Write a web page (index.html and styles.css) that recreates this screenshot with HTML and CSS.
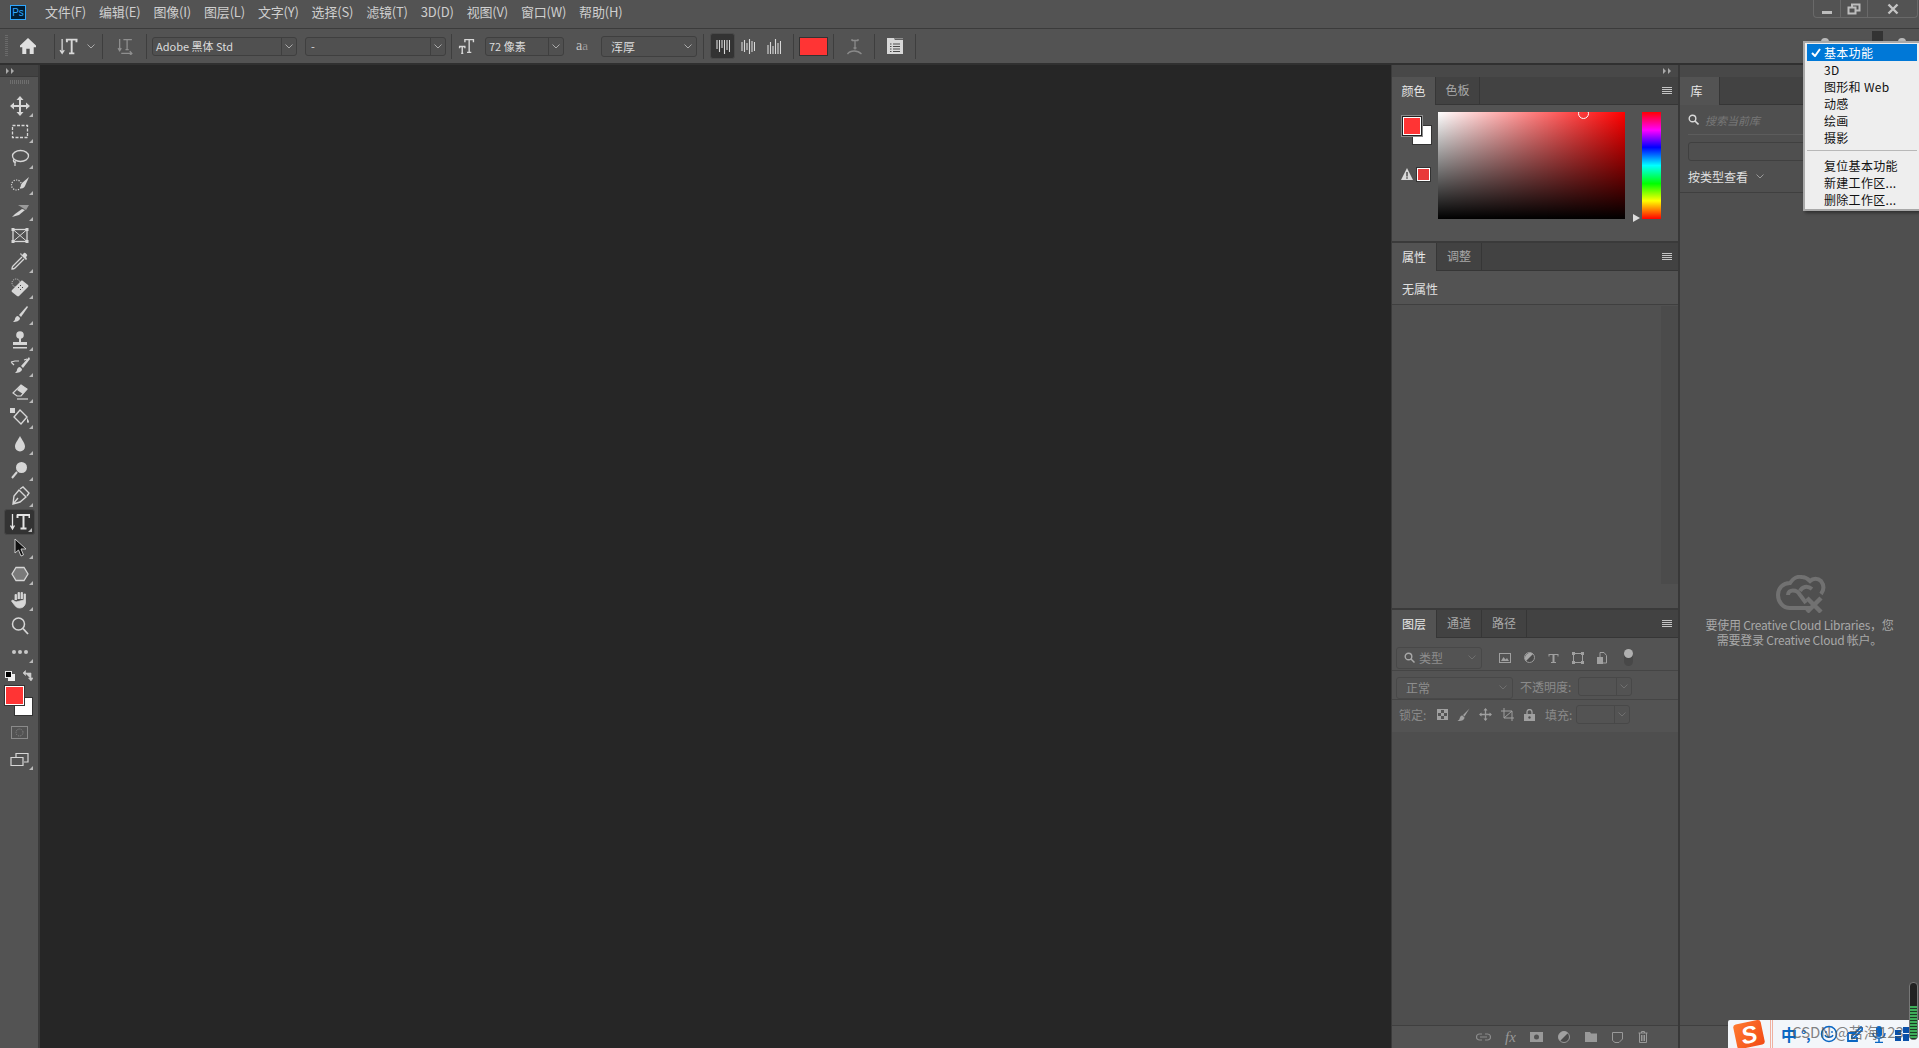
FILE: index.html
```html
<!DOCTYPE html>
<html lang="zh">
<head>
<meta charset="utf-8">
<title>Photoshop</title>
<link rel="stylesheet" href="styles.css">
</head>
<body>
<div class="app">
  <header class="menubar">
    <div class="pslogo">Ps</div>
    <nav class="menus">
      <span>文件(F)</span><span>编辑(E)</span><span>图像(I)</span><span>图层(L)</span><span>文字(Y)</span><span>选择(S)</span><span>滤镜(T)</span><span>3D(D)</span><span>视图(V)</span><span>窗口(W)</span><span>帮助(H)</span>
    </nav>
    <div class="winctl">
      <span class="wbtn"><svg width="12" height="12" viewBox="0 0 12 12"><rect x="1" y="8" width="10" height="3" fill="#bdbdbd"/></svg></span>
      <span class="wbtn"><svg width="14" height="12" viewBox="0 0 14 12"><path d="M1.5 4.500h7v6h-7zM5 4V1.500h7.500v6H9" fill="none" stroke="#bdbdbd" stroke-width="2"/></svg></span>
      <span class="wbtn wide"><svg width="12" height="12" viewBox="0 0 12 12"><path d="M1.500 1.500l9 9M10.500 1.500l-9 9" stroke="#c4c4c4" stroke-width="2.400"/></svg></span>
    </div>
  </header>

  <section class="options">
    <i class="grip"></i>
    <svg class="o-home" width="16" height="16" viewBox="0 0 14 14"><path d="M7 0L0 6.500V8h2v6h3.500V9.500h3V14H12V8h2V6.500z" fill="#e0e0e0"/></svg>
    <i class="osep s1"></i>
    <svg class="o-type" width="19" height="17" viewBox="0 0 17 16"><path d="M2.500 1v13M.5 11.500l2 3 2-3" fill="none" stroke="#d8d8d8" stroke-width="1.200"/><path d="M6 1.500h11M7 1v3M16 1v3M11.500 2v12M9 14.500h5" fill="none" stroke="#d8d8d8" stroke-width="1.800"/></svg>
    <svg class="chev c1" width="8" height="5" viewBox="0 0 8 5"><path d="M.5.500L4 4 7.500.500" fill="none" stroke="#aaa"/></svg>
    <i class="osep s2"></i>
    <svg class="o-warp" width="17" height="17" viewBox="0 0 14 16"><path d="M1.500 1v11M0 9.500l1.500 2.500 1.500-2.500M5 1.500h8M8.500 2v9M7 11h3M3 14.500h10M11 12.500l2 2-2 2" fill="none" stroke="#8f8f8f" stroke-width="1.200"/></svg>
    <i class="osep s3"></i>
    <div class="sel font"><span>Adobe 黑体 Std</span><b><svg width="8" height="5" viewBox="0 0 8 5"><path d="M.5.500L4 4 7.500.500" fill="none" stroke="#aaa"/></svg></b></div>
    <div class="sel style"><span>-</span><b><svg width="8" height="5" viewBox="0 0 8 5"><path d="M.5.500L4 4 7.500.500" fill="none" stroke="#aaa"/></svg></b></div>
    <i class="osep s4"></i>
    <svg class="o-size" width="17" height="16" viewBox="0 0 14 15"><path d="M5 1.500h9M5.500 1v3M13.500 1v3M9.500 2v11M7.500 13.500h4M0 8h6M.500 8v1.500M5.500 8v1.500M3 8v6M2 14.500h2" fill="none" stroke="#d8d8d8" stroke-width="1.300"/></svg>
    <div class="sel size"><span>72 像素</span><b><svg width="8" height="5" viewBox="0 0 8 5"><path d="M.5.500L4 4 7.500.500" fill="none" stroke="#aaa"/></svg></b></div>
    <span class="o-aa">a<small>a</small></span>
    <div class="sel aa"><span>浑厚</span><svg width="8" height="5" viewBox="0 0 8 5"><path d="M.5.500L4 4 7.500.500" fill="none" stroke="#aaa"/></svg></div>
    <i class="osep s5"></i>
    <span class="alignbtn on"><svg width="14" height="15" viewBox="0 0 14 15"><path d="M1 1v9M3.500 1v12M6 1v8M8.500 1v14M11 1v10M13.500 1v12" stroke="#d8d8d8" stroke-width="1.100"/></svg></span>
    <span class="alignbtn"><svg width="14" height="15" viewBox="0 0 14 15"><path d="M1 3v9M3.500 1v12M6 4v7M8.500 0v15M11 2v11M13.500 3v9" stroke="#d8d8d8" stroke-width="1.100"/></svg></span>
    <span class="alignbtn"><svg width="14" height="15" viewBox="0 0 14 15"><path d="M1 6v9M3.500 3v12M6 7v8M8.500 0v15M11 4v11M13.500 2v13" stroke="#d8d8d8" stroke-width="1.100"/></svg></span>
    <i class="osep s6"></i>
    <div class="o-color"></div>
    <i class="osep s7"></i>
    <svg class="o-warpt" width="15" height="17" viewBox="0 0 15 17"><path d="M5 2.500h6M5 1v2M11 1v2M8 2.500v9M6.500 10h3M.5 16c3-4 10-4 14 0" fill="none" stroke="#8a8a8a" stroke-width="1.300"/></svg>
    <i class="osep s8"></i>
    <svg class="o-panel" width="16" height="16" viewBox="0 0 16 16"><path d="M0 0h7l1 2h8v14H0z" fill="#d8d8d8"/><path d="M7 .5h9" stroke="#8d8d8d" stroke-width="1.500"/><path d="M3 6h1.500M6 6h7M3 8.500h1.500M6 8.500h7M3 11h1.500M6 11h7M3 13.500h1.500M6 13.500h7" stroke="#4a4a4a" stroke-width="1"/></svg>
    <i class="osep s9"></i>
    <div class="o-right">
      <svg class="o-dot" width="10" height="10" viewBox="0 0 10 10"><circle cx="5" cy="5" r="4" fill="#bbb"/></svg>
      <i class="o-ws"></i>
      <svg class="o-dot" width="10" height="10" viewBox="0 0 10 10"><circle cx="5" cy="5" r="4" fill="#bbb"/></svg>
    </div>
  </section>

  <main class="work">
    <aside class="tools">
      <div class="collapse"><svg width="8" height="6" viewBox="0 0 8 6"><path d="M0 0l3 3-3 3zM5 0l3 3-3 3z" fill="#aaa"/></svg></div>
      <i class="toolgrip"></i>
      <div class="toollist">
        <span class="tool sub"><svg viewBox="0 0 20 20"><path d="M10 3v14M3 10h14" stroke="#d6d6d6" stroke-width="2"/><path d="M10 0L6.500 4h7zM10 20l-3.500-4h7zM0 10l4-3.500v7zM20 10l-4-3.500v7z" fill="#d6d6d6"/></svg></span>
        <span class="tool sub"><svg viewBox="0 0 20 20"><rect x="2.500" y="3.500" width="15" height="12" fill="none" stroke="#d6d6d6" stroke-width="1.300" stroke-dasharray="3 1.500"/></svg></span>
        <span class="tool sub"><svg viewBox="0 0 20 20"><ellipse cx="10.500" cy="8" rx="8" ry="5.500" fill="none" stroke="#d6d6d6" stroke-width="1.300"/><path d="M4 11c-1.500 2 0 4 2 3M5 13v5" fill="none" stroke="#d6d6d6" stroke-width="1.200"/></svg></span>
        <span class="tool sub"><svg viewBox="0 0 20 20"><circle cx="6.500" cy="11" r="5" fill="none" stroke="#d6d6d6" stroke-width="1.200" stroke-dasharray="1.200 1.300"/><path d="M19 3l-7 6-2 5c2 1 4 0 5-2z" fill="#d6d6d6"/></svg></span>
        <span class="tool sub"><svg viewBox="0 0 20 20"><path d="M8 5h11l-3 5z" fill="#9a9a9a"/><path d="M12 9l-7 5-3 3 7-2 6-5z" fill="#d6d6d6"/></svg></span>
        <span class="tool"><svg viewBox="0 0 20 20"><rect x="3" y="3.500" width="14" height="12" fill="none" stroke="#d6d6d6" stroke-width="1.300"/><path d="M3 3.500l14 12M17 3.500l-14 12" stroke="#d6d6d6"/><path d="M1.500 2h3v3h-3zM15.500 2h3v3h-3zM1.500 14h3v3h-3zM15.500 14h3v3h-3z" fill="#d6d6d6"/></svg></span>
        <span class="tool sub"><svg viewBox="0 0 20 20"><path d="M12 5L3 14c-1 1-1 3-1 3s2 0 3-1l9-9" fill="none" stroke="#d6d6d6" stroke-width="1.300"/><path d="M12 3l2-2c1-1 4 2 3 3l-1 1 1 2-1 1-6-6 1-1z" fill="#d6d6d6"/></svg></span>
        <span class="tool sub"><svg viewBox="0 0 20 20"><circle cx="6" cy="5" r="4" fill="none" stroke="#d6d6d6" stroke-dasharray="1 1.200"/><path d="M13 3l5 4c1 1 0 2 0 2l-9 9c-1 1-2 0-2 0l-5-4c-1-1 0-2 0-2l9-9c1-1 2 0 2 0z" fill="#d6d6d6"/><path d="M8 9h1v1H8zM10 7h1v1h-1zM10 11h1v1h-1zM12 9h1v1h-1z" fill="#444"/></svg></span>
        <span class="tool sub"><svg viewBox="0 0 20 20"><path d="M17 2L9 11l2 2 7-10z" fill="#d6d6d6"/><path d="M8 12c-2 0-3 2-3 3s-1 2-2 3c3 0 7-1 7-4z" fill="#d6d6d6"/></svg></span>
        <span class="tool sub"><svg viewBox="0 0 20 20"><circle cx="10" cy="5" r="3.800" fill="#d6d6d6"/><path d="M9 8h2v4h6v3H3v-3h6zM3 17h14v1.500H3z" fill="#d6d6d6"/></svg></span>
        <span class="tool sub"><svg viewBox="0 0 20 20"><path d="M19 1l-8 9 2 2 7-9z" fill="#d6d6d6"/><path d="M10 11c-2 0-3 2-3 3s-1 2-2 3c3 0 7-1 7-4z" fill="#d6d6d6"/><path d="M1 6l4-1h4M1 6l3 3M14 4l3-1" fill="none" stroke="#d6d6d6" stroke-width="1.200"/></svg></span>
        <span class="tool sub"><svg viewBox="0 0 20 20"><path d="M11 3l6 4-6 7H7l-4-3z" fill="none" stroke="#d6d6d6" stroke-width="1.200"/><path d="M11 3l6 4-4 5-6-4z" fill="#d6d6d6"/><path d="M7 17h11" stroke="#d6d6d6" stroke-width="1.200"/></svg></span>
        <span class="tool sub"><svg viewBox="0 0 20 20"><path d="M0 0h5v5H0z" fill="#d6d6d6"/><path d="M10 2l7 7-6 7-7-7z" fill="none" stroke="#d6d6d6" stroke-width="1.400"/><path d="M17 10c1 1 2 3 2 4s-2 1-2 0 0-3 0-4z" fill="#d6d6d6"/></svg></span>
        <span class="tool sub"><svg viewBox="0 0 20 20"><path d="M10 2c2 4 5 7 5 10.500A5 5 0 0 1 5 12.500C5 9 8 6 10 2z" fill="#d6d6d6"/></svg></span>
        <span class="tool sub"><svg viewBox="0 0 20 20"><circle cx="11.500" cy="7.500" r="5.500" fill="#d6d6d6"/><path d="M7 12l-5 6" stroke="#d6d6d6" stroke-width="2"/></svg></span>
        <span class="tool sub"><svg viewBox="0 0 20 20"><path d="M3 18l1-8 5-6 7 7-6 5zM3 18l5-6" fill="none" stroke="#d6d6d6" stroke-width="1.400"/><path d="M10 3l3-2 6 6-2 3" fill="none" stroke="#d6d6d6" stroke-width="1.400"/></svg></span>
        <span class="tool on sub"><svg viewBox="0 0 20 20"><path d="M2.500 2v15M.5 13.500l2 3.500 2-3.500" fill="none" stroke="#e4e4e4" stroke-width="1.300"/><path d="M7 3h13M7.500 2.500v3.500M19.500 2.500v3.500M13.500 3v13M10.500 16.500h6" fill="none" stroke="#e4e4e4" stroke-width="2"/></svg></span>
        <span class="tool sub"><svg viewBox="0 0 20 20"><path d="M5 1v14l3.500-3 2.500 6 2.500-1-2.500-6h5z" fill="#111" stroke="#d6d6d6" stroke-width=".9"/></svg></span>
        <span class="tool sub"><svg viewBox="0 0 20 20"><path d="M6 3.500h8l4 6.500-4 6.500H6L2 10z" fill="#7a7a7a" stroke="#d6d6d6" stroke-width="1.300"/></svg></span>
        <span class="tool sub"><svg viewBox="0 0 20 20"><path d="M5 10V4.500h1.500V10M8 9V2.500h1.500V9M11 9V2.500h1.500V9M14 10V4h1.500v8c0 3-2 6-6 6-3 0-4-2-5-3l-3-4 1-1 3.500 2z" fill="#d6d6d6" stroke="#d6d6d6" stroke-width=".8"/></svg></span>
        <span class="tool"><svg viewBox="0 0 20 20"><circle cx="8.500" cy="8" r="6" fill="none" stroke="#d6d6d6" stroke-width="1.500"/><path d="M13 12.500l5 5.500" stroke="#d6d6d6" stroke-width="1.800"/></svg></span>
        <span class="tool sub"><svg viewBox="0 0 20 20"><circle cx="4" cy="10" r="2" fill="#c8c8c8"/><circle cx="10" cy="10" r="2" fill="#c8c8c8"/><circle cx="16" cy="10" r="2" fill="#c8c8c8"/></svg></span>
      </div>
      <div class="colorctl">
        <svg width="10" height="10" viewBox="0 0 10 10"><rect x="3" y="3" width="7" height="7" fill="#eee"/><rect x=".5" y=".5" width="6" height="6" fill="#000" stroke="#eee"/></svg>
        <svg width="11" height="11" viewBox="0 0 11 11"><path d="M3 3h6v6M1 3l2.500-2.500V5.500zM6.500 8H11L9 11z" fill="#ccc" stroke="#ccc" stroke-width=".6"/></svg>
      </div>
      <div class="fgbg"><i class="bgc"></i><i class="fgc"></i></div>
      <div class="qmask"><svg width="17" height="13" viewBox="0 0 17 13"><rect x=".5" y=".5" width="16" height="12" fill="none" stroke="#8a8a8a"/><circle cx="8.500" cy="6.500" r="3.500" fill="none" stroke="#8a8a8a" stroke-dasharray="1 1"/></svg></div>
      <div class="tool sub screen"><svg viewBox="0 0 20 20"><path d="M1 8.500h12v8H1zM6 8V4.500h12V13h-4" fill="none" stroke="#d6d6d6" stroke-width="1.200"/></svg></div>
    </aside>

    <div class="canvas"></div>

    <div class="dock">
      <div class="dockstrip"><svg width="8" height="6" viewBox="0 0 8 6"><path d="M0 0l3 3-3 3zM5 0l3 3-3 3z" fill="#aaa"/></svg></div>

      <section class="panel p-color">
        <div class="tabs"><span class="tab on">颜色</span><span class="tab">色板</span><i class="hamb"></i></div>
        <div class="colorbody">
          <div class="swatchcol">
            <div class="fgbg2"><i class="bg2"></i><i class="fg2"></i></div>
            <div class="warn">
              <svg width="12" height="12" viewBox="0 0 12 12"><path d="M6 0l6 12H0z" fill="#d8d8d8"/><path d="M5.300 4h1.400v4.500H5.300zM5.300 9.300h1.400v1.400H5.300z" fill="#444"/></svg>
              <i class="websafe"></i>
            </div>
          </div>
          <div class="field"><i class="picker"></i></div>
          <div class="huewrap"><div class="hue"></div><i class="huearrow"></i></div>
        </div>
      </section>

      <section class="panel p-props">
        <div class="tabs"><span class="tab on">属性</span><span class="tab">调整</span><i class="hamb"></i></div>
        <div class="noprops">无属性</div>
        <div class="propbody"><i class="scroll"></i></div>
      </section>

      <section class="panel p-layers">
        <div class="tabs"><span class="tab on">图层</span><span class="tab">通道</span><span class="tab">路径</span><i class="hamb"></i></div>
        <div class="lrow r1">
          <div class="lsel search">
            <svg width="11" height="11" viewBox="0 0 11 11"><circle cx="4.500" cy="4.500" r="3.300" fill="none" stroke="#a8a8a8" stroke-width="1.400"/><path d="M7 7l3.500 3.500" stroke="#a8a8a8" stroke-width="1.500"/></svg>
            <span>类型</span>
            <svg class="lchev" width="8" height="5" viewBox="0 0 8 5"><path d="M.5.500L4 4 7.500.500" fill="none" stroke="#6f6f6f"/></svg>
          </div>
          <div class="licons">
            <svg width="12" height="10" viewBox="0 0 12 10"><rect x=".5" y=".5" width="11" height="9" fill="none" stroke="#a0a0a0"/><path d="M2 8l2.500-4 2 2.500L8 5l2 3z" fill="#a0a0a0"/></svg>
            <svg width="11" height="11" viewBox="0 0 11 11"><circle cx="5.500" cy="5.500" r="5" fill="#4a4a4a" stroke="#9a9a9a"/><path d="M9 2L2 9a5 5 0 0 1 7-7z" fill="#a8a8a8"/></svg>
            <svg width="11" height="10" viewBox="0 0 11 10"><path d="M.5 1h10v2.500h-1V2H6.500v7H8v1H3V9h1.500V2H1.500v1.500h-1z" fill="#a0a0a0"/></svg>
            <svg width="12" height="12" viewBox="0 0 12 12"><path d="M2 1.500h8M2 10.500h8M1.500 2v8M10.500 2v8" stroke="#a0a0a0"/><path d="M0 0h3v3H0zM9 0h3v3H9zM0 9h3v3H0zM9 9h3v3H9z" fill="#a0a0a0"/></svg>
            <svg width="10" height="12" viewBox="0 0 10 12"><path d="M3 .5h4l2.500 3V11H3z" fill="none" stroke="#a0a0a0"/><rect y="5" width="6" height="7" fill="#a0a0a0"/></svg>
          </div>
          <div class="ltoggle"><i></i></div>
        </div>
        <div class="lrow r2">
          <div class="lsel blend"><span>正常</span><svg class="lchev" width="8" height="5" viewBox="0 0 8 5"><path d="M.5.500L4 4 7.500.500" fill="none" stroke="#6f6f6f"/></svg></div>
          <label class="llabel">不透明度:</label>
          <div class="numbox"><b><svg width="8" height="5" viewBox="0 0 8 5"><path d="M.5.500L4 4 7.500.500" fill="none" stroke="#6f6f6f"/></svg></b></div>
        </div>
        <div class="lrow r3">
          <label class="llabel lk">锁定:</label>
          <div class="locks">
            <svg width="11" height="11" viewBox="0 0 11 11"><rect x=".5" y=".5" width="10" height="10" fill="none" stroke="#a0a0a0"/><path d="M1 1h3v3H1zM7 1h3v3H7zM4 4h3v3H4zM1 7h3v3H1zM7 7h3v3H7z" fill="#a0a0a0"/></svg>
            <svg width="13" height="13" viewBox="0 0 13 13"><path d="M12.500.5L6 7l1.500 1.500zM5.500 7.500C3 7.500 3 10 2.500 11 2 12 1 12.500.5 13c3 0 7-.5 7-3.500z" fill="#a0a0a0"/></svg>
            <svg width="13" height="13" viewBox="0 0 13 13"><path d="M6.500 1v11M1 6.500h11" stroke="#a0a0a0" stroke-width="1.300"/><path d="M6.500 0L4.500 2.500h4zM6.500 13l-2-2.500h4zM0 6.500l2.500-2v4zM13 6.500l-2.500-2v4z" fill="#a0a0a0"/></svg>
            <svg width="14" height="13" viewBox="0 0 14 13"><path d="M3 0v10h10M0 3h11v10M3 10l8-7" fill="none" stroke="#a0a0a0"/></svg>
            <svg width="11" height="12" viewBox="0 0 11 12"><path d="M3 5V3a2.500 2.500 0 0 1 5 0v2" fill="none" stroke="#a0a0a0" stroke-width="1.300"/><rect y="5" width="11" height="7" fill="#a0a0a0"/><circle cx="5.500" cy="8.500" r="1.200" fill="#505050"/></svg>
          </div>
          <label class="llabel fl">填充:</label>
          <div class="numbox"><b><svg width="8" height="5" viewBox="0 0 8 5"><path d="M.5.500L4 4 7.500.500" fill="none" stroke="#6f6f6f"/></svg></b></div>
        </div>
        <div class="lbody"></div>
        <div class="lfoot">
          <svg width="15" height="8" viewBox="0 0 15 8"><path d="M6 1H3.500a3 3 0 0 0 0 6H6M9 1h2.500a3 3 0 0 1 0 6H9M4 4h7" fill="none" stroke="#8c8c8c" stroke-width="1.200"/></svg>
          <span class="fx">fx</span>
          <svg width="13" height="10" viewBox="0 0 13 10"><path fill-rule="evenodd" d="M0 0h13v10H0zM6.500 2.500a2.500 2.500 0 1 0 0 5 2.500 2.500 0 0 0 0-5z" fill="#999"/></svg>
          <svg width="12" height="12" viewBox="0 0 12 12"><circle cx="6" cy="6" r="5.500" fill="#4a4a4a" stroke="#999"/><path d="M10 2L2 10a5.500 5.500 0 0 1 8-8z" fill="#a0a0a0"/></svg>
          <svg width="12" height="10" viewBox="0 0 12 10"><path d="M0 0h5l1 1.500h6V10H0z" fill="#999"/></svg>
          <svg width="11" height="11" viewBox="0 0 11 11"><path d="M.5.500h10V7L7 10.500H3L.5 8.500z" fill="none" stroke="#999"/></svg>
          <svg width="10" height="12" viewBox="0 0 10 12"><path d="M.5 2h9M3.500 2V.5h3V2M1.500 2v9.500h7V2M3.500 4v6M5 4v6M6.500 4v6" fill="none" stroke="#999"/></svg>
        </div>
      </section>
    </div>

    <aside class="library">
      <div class="libstrip"></div>
      <div class="tabs"><span class="tab on libtab">库</span></div>
      <div class="libsearch">
        <svg width="11" height="11" viewBox="0 0 11 11"><circle cx="4.500" cy="4.500" r="3.300" fill="none" stroke="#d8d8d8" stroke-width="1.400"/><path d="M7 7l3.500 3.500" stroke="#d8d8d8" stroke-width="1.600"/></svg>
        <em>搜索当前库</em>
      </div>
      <div class="libselect"></div>
      <div class="libview"><span>按类型查看</span><svg width="8" height="5" viewBox="0 0 8 5"><path d="M.5.500L4 4 7.500.500" fill="none" stroke="#999"/></svg></div>
      <div class="libempty">
        <svg width="50" height="38" viewBox="0 0 50 38"><path d="M36 33H14C7 33 2 27 2 20 2 13 7 8 14 8c3-5 8-7 12-6 3 0 6 2 8 4 3-3 8-3 11 0 3 4 3 9 0 13" fill="none" stroke="#717171" stroke-width="4"/><path d="M12 20c0-6 9-6 12 0l6 8M36 14c-5-4-10-2-12 2" fill="none" stroke="#717171" stroke-width="4"/><path d="M31 23l14 14M45 23L31 37" stroke="#717171" stroke-width="4.500"/></svg>
        <p>要使用 Creative Cloud Libraries，您<br>需要登录 Creative Cloud 帐户。</p>
      </div>
      <div class="libfoot"></div>
    </aside>
  </main>

  <ul class="wsmenu">
    <li class="sel-item"><svg width="10" height="9" viewBox="0 0 10 9"><path d="M1 5l3 3 5-7" fill="none" stroke="#fff" stroke-width="2"/></svg>基本功能</li>
    <li>3D</li>
    <li>图形和 Web</li>
    <li>动感</li>
    <li>绘画</li>
    <li>摄影</li>
    <li class="msep"></li>
    <li>复位基本功能</li>
    <li>新建工作区...</li>
    <li>删除工作区...</li>
  </ul>

  <div class="ime">
    <span class="sogou">S</span>
    <i class="imesep"></i>
    <span class="imecn">中</span>
    <span class="imep">°,</span>
    <svg width="18" height="18" viewBox="0 0 18 18"><circle cx="9" cy="9" r="7.500" fill="none" stroke="#0a66c2" stroke-width="1.500"/><path d="M5 10c1 3 7 3 8 0M6 6v2M12 6v2" fill="none" stroke="#0a66c2" stroke-width="1.300"/></svg>
    <svg width="16" height="16" viewBox="0 0 16 16"><path d="M1 7h7M1 7v8h9v-4M5 10l9-9 2 2-9 9H5z" fill="none" stroke="#0a66c2" stroke-width="1.800"/></svg>
    <svg width="14" height="17" viewBox="0 0 14 17"><rect x="4" y="0" width="6" height="11" rx="3" fill="#0a66c2"/><path d="M1 7c0 7 12 7 12 0M7 13v3M3 16.500h8" fill="none" stroke="#0a66c2" stroke-width="1.500"/></svg>
    <svg width="14" height="14" viewBox="0 0 14 14"><path d="M0 3h6v5H0zM8 0h6v6H8zM0 9h6v5H0zM8 7h6v7H8z" fill="#0a4fa8"/></svg>
  </div>
  <div class="watermark">CSDN @苦海123</div>
  <div class="meter"><i></i></div>
</div>
</body>
</html>
```

FILE: styles.css
```css
* { box-sizing: border-box; }
html, body { margin: 0; padding: 0; height: 100%; overflow: hidden; background: #262626; }
body { font: 12px "Noto Sans CJK SC", "Liberation Sans", sans-serif; color: #d8d8d8; }
i { display: block; font-style: normal; }
svg { display: block; flex: none; }
ul, p { margin: 0; padding: 0; list-style: none; }

.app { position: relative; width: 1919px; height: 1048px; display: flex; flex-direction: column; overflow: hidden; }

/* menu bar */
.menubar { height: 29px; flex: none; display: flex; align-items: center; background: #535353; border-bottom: 1px solid #3b3b3b; padding-bottom: 4px; }
.pslogo { width: 16px; height: 15px; margin-left: 10px; border: 1px solid #31a8ff; background: #001e36; color: #31a8ff; font: 10px/13px "Liberation Sans", sans-serif; text-align: center; flex: none; }
.menus { display: flex; gap: 13px; margin-left: 19px; font-size: 13px; line-height: 16px; color: #cfcfcf; letter-spacing: -.2px; }
.winctl { margin-left: auto; align-self: flex-start; display: flex; height: 18px; width: 105px; border: 1px solid #696969; border-top: 0; border-radius: 0 0 4px 4px; margin-right: 1px; }
.wbtn { width: 27px; display: flex; align-items: center; justify-content: center; border-right: 1px solid #696969; }
.wbtn.wide { flex: 1; border-right: 0; }

/* options bar */
.options { height: 36px; flex: none; display: flex; align-items: center; background: #535353; border-bottom: 2px solid #303030; position: relative; }
.grip { width: 3px; height: 22px; margin-left: 5px; background: repeating-linear-gradient(#6a6a6a 0 1px, transparent 1px 2px); }
.o-home { margin-left: 12px; }
.osep { width: 1px; height: 25px; background: #3e3e3e; flex: none; }
.s1 { margin-left: 18px; }
.o-type { margin-left: 4px; }
.c1 { margin-left: 9px; }
.s2 { margin-left: 7px; }
.o-warp { margin-left: 14px; }
.s3 { margin-left: 12px; }
.sel { height: 19px; border: 1px solid #3f3f3f; border-radius: 3px; display: flex; align-items: center; font-size: 11px; color: #dcdcdc; background: #505050; flex: none; padding-left: 3px; }
.sel span { flex: 1; white-space: nowrap; }
.sel b { width: 15px; height: 100%; border-left: 1px solid #3f3f3f; display: flex; align-items: center; justify-content: center; }
.font { width: 145px; margin-left: 5px; }
.style { width: 141px; margin-left: 8px; padding-left: 5px; }
.s4 { margin-left: 5px; }
.o-size { margin-left: 6px; }
.size { width: 79px; margin-left: 10px; }
.o-aa { width: 13px; margin-left: 12px; margin-right: 12px; color: #c4c4c4; font: 14px/14px "Liberation Serif", serif; white-space: nowrap; }
.o-aa small { font-size: 13px; color: #999; }
.aa { width: 96px; height: 21px; padding: 0 4px 0 9px; font-size: 12px; }
.s5 { margin-left: 6px; }
.alignbtn { width: 25px; height: 26px; display: flex; align-items: center; justify-content: center; border-radius: 3px; flex: none; }
.s5 + .alignbtn { margin-left: 6px; }
.alignbtn + .alignbtn + .alignbtn { margin-left: 1px; }
.alignbtn.on { background: #333; border: 1px solid #4a4a4a; }
.s6 { margin-left: 7px; }
.o-color { width: 29px; height: 19px; margin-left: 5px; background: #ff3434; border: 1px solid #333; flex: none; }
.s7 { margin-left: 5px; }
.o-warpt { margin-left: 13px; }
.s8 { margin-left: 12px; }
.o-panel { margin-left: 12px; }
.s9 { margin-left: 12px; }
.o-right { margin-left: auto; display: flex; align-items: flex-start; height: 100%; margin-right: 12px; }
.o-dot { margin-top: 8px; }
.o-ws { width: 11px; height: 14px; background: #333; margin: 2px 14px 0 42px; }

/* work area */
.work { flex: 1; display: flex; min-height: 0; }

/* tools */
.tools { width: 40px; flex: none; background: #535353; border-right: 2px solid #3a3a3a; display: flex; flex-direction: column; }
.collapse { height: 12px; background: #424242; display: flex; align-items: center; padding-left: 6px; border-bottom: 1px solid #3a3a3a; }
.toolgrip { width: 20px; height: 4px; margin: 3px 0 0 10px; background: repeating-linear-gradient(90deg, #6e6e6e 0 1px, transparent 1px 2px); }
.toollist { margin-top: 9px; display: flex; flex-direction: column; }
.tool { position: relative; display: flex; align-items: center; justify-content: center; width: 31px; height: 26px; margin-left: 4px; border-radius: 3px; }
.tool svg { width: 20px; height: 20px; }
.tool.on { background: #333; border: 1px solid #484848; }
.tool.sub::after { content: ""; position: absolute; right: 2px; bottom: 2px; border: 2px solid transparent; border-right-color: #b8b8b8; border-bottom-color: #b8b8b8; }
.colorctl { display: flex; gap: 7px; align-items: center; margin: 5px 0 0 5px; height: 11px; }
.fgbg { position: relative; height: 30px; margin: 5px 0 0 5px; width: 28px; }
.fgc { position: absolute; left: 0; top: 0; width: 19px; height: 19px; background: #ff3434; border: 1px solid #fff; outline: 1px solid #333; }
.bgc { position: absolute; right: 0; bottom: 0; width: 19px; height: 19px; background: #fff; border: 1px solid #333; }
.qmask { margin: 10px 0 0 11px; }
.screen { margin-top: 7px; }

.canvas { flex: 1; background: #262626; border-right: 1px solid #3a3a3a; }

/* dock */
.dock { width: 288px; flex: none; display: flex; flex-direction: column; background: #3a3a3a; border-right: 2px solid #383838; }
.dockstrip { height: 12px; background: #484848; display: flex; align-items: center; justify-content: flex-end; padding-right: 7px; flex: none; }
.panel { display: flex; flex-direction: column; flex: none; background: #535353; }
.tabs { position: relative; height: 28px; background: #424242; display: flex; flex: none; border-bottom: 1px solid #363636; }
.tab { display: flex; align-items: center; justify-content: center; width: 44px; color: #a8a8a8; border-right: 1px solid #363636; font-size: 12px; padding-bottom: 2px; }
.tab.on { background: #535353; color: #e8e8e8; margin-bottom: -1px; position: relative; }
.p-layers .tab, .p-props .tab { width: 45px; }
.hamb { position: absolute; right: 6px; top: 10px; width: 10px; height: 7px; background: repeating-linear-gradient(#c4c4c4 0 1px, transparent 1px 2px); }

.p-color { height: 164px; }
.colorbody { flex: 1; display: flex; align-items: flex-start; padding: 7px 0 0 9px; }
.swatchcol { width: 37px; flex: none; }
.fgbg2 { position: relative; width: 31px; height: 33px; margin-top: 5px; }
.fg2 { position: absolute; left: 2px; top: 0; width: 18px; height: 18px; background: #ff3434; border: 1px solid #fff; box-shadow: 0 0 0 1px #222, 0 0 0 2px #8a8a8a; }
.bg2 { position: absolute; right: 0; top: 8px; width: 20px; height: 20px; background: #fff; border: 1px solid #333; }
.warn { display: flex; gap: 4px; margin-top: 18px; }
.websafe { width: 13px; height: 13px; background: #e93a3a; border: 1px solid #fff; outline: 1px solid #333; }
.field { position: relative; width: 187px; height: 107px; overflow: hidden; background: linear-gradient(to bottom, transparent, #000), linear-gradient(to right, #fff, #f00); flex: none; }
.picker { position: absolute; left: 140px; top: -4px; width: 11px; height: 11px; border-radius: 50%; border: 1px solid #fff; }
.huewrap { position: relative; margin-left: 17px; }
.hue { width: 19px; height: 107px; background: linear-gradient(to bottom, #f00 0, #f0f 17%, #00f 33%, #0ff 50%, #0f0 67%, #ff0 83%, #f00 100%); }
.huearrow { position: absolute; left: -9px; bottom: -3px; width: 0; height: 0; border-left: 7px solid #ddd; border-top: 4px solid transparent; border-bottom: 4px solid transparent; }

.p-props { height: 365px; margin-top: 2px; background: #505050; }
.noprops { height: 34px; flex: none; padding: 9px 0 0 10px; background: #535353; border-bottom: 1px solid #3f3f3f; color: #e0e0e0; line-height: 18px; }
.propbody { flex: 1; display: flex; justify-content: flex-end; }
.scroll { width: 17px; background: #4b4b4b; margin: 1px 0 24px; }

.p-layers { flex: 1; margin-top: 2px; background: #4e4e4e; }
.lrow { flex: none; display: flex; align-items: center; background: #535353; border-bottom: 1px solid #454545; color: #8e8e8e; padding-left: 4px; }
.r1 { height: 33px; padding-top: 7px; }
.r2 { height: 29px; padding-top: 2px; }
.r3 { height: 32px; border-bottom: 0; padding-bottom: 3px; }
.lsel { height: 22px; border: 1px solid #484848; border-radius: 3px; display: flex; align-items: center; flex: none; }
.lchev { margin-left: auto; margin-right: 5px; }
.search { width: 86px; padding-left: 7px; gap: 4px; color: #8e8e8e; }
.licons { display: flex; align-items: center; gap: 13px; margin-left: 17px; }
.ltoggle { width: 9px; height: 17px; margin-left: 17px; margin-top: -1px; border-radius: 5px; background: #484848; position: relative; }
.ltoggle i { position: absolute; left: 0; top: 0; width: 9px; height: 9px; border-radius: 50%; background: #b0b0b0; }
.blend { width: 117px; padding-left: 9px; margin-top: 3px; }
.llabel { margin-left: 7px; width: 51px; white-space: nowrap; font-size: 12px; color: #8a8a8a; }
.numbox { width: 54px; height: 19px; margin-left: 7px; border: 1px solid #484848; border-radius: 3px; display: flex; justify-content: flex-end; flex: none; }
.numbox b { width: 15px; border-left: 1px solid #484848; display: flex; align-items: center; justify-content: center; }
.llabel.lk { margin-left: 3px; width: 38px; }
.locks { display: flex; align-items: center; gap: 9px; width: 102px; }
.llabel.fl { margin-left: 6px; width: 30px; }
.r3 .numbox { margin-left: 1px; }
.lbody { flex: 1; }
.lfoot { height: 23px; flex: none; background: #535353; border-top: 1px solid #3f3f3f; display: flex; align-items: center; justify-content: flex-end; gap: 15px; padding-right: 30px; position: relative; }
.fx { font: italic 15px "Liberation Serif", serif; color: #999; width: 11px; margin: 0 -1px; white-space: nowrap; }

/* library */
.library { width: 239px; flex: none; background: #4f4f4f; display: flex; flex-direction: column; position: relative; }
.libstrip { height: 12px; flex: none; background: #484848; }
.libtab { width: 40px; padding-right: 6px; }
.libsearch { height: 30px; margin: 0 0 0 8px; display: flex; align-items: center; gap: 6px; border-bottom: 1px solid #5c5c5c; flex: none; }
.libsearch em { color: #777; font-size: 11px; }
.libselect { height: 19px; margin: 7px 0 0 8px; border: 1px solid #404040; border-radius: 3px; flex: none; }
.libview { height: 32px; display: flex; align-items: center; gap: 8px; padding-left: 8px; border-bottom: 1px solid #3f3f3f; flex: none; color: #e0e0e0; }
.libempty { flex: 1; display: flex; flex-direction: column; align-items: center; padding: 382px 0 0; color: #a8a8a8; font-size: 12px; line-height: 15px; text-align: center; }
.libempty svg { margin-left: 2px; margin-bottom: 4px; }
.libempty p { letter-spacing: -.25px; }
.libfoot { height: 23px; flex: none; border-top: 1px solid #3f3f3f; background: #535353; }

/* popup */
.wsmenu { position: absolute; left: 1803px; top: 41px; width: 116px; height: 170px; background: #eeeeee; border: 2px solid #a8a8a8; border-right: 0; box-shadow: 2px 2px 3px rgba(0,0,0,.4); padding: 1px 0 0 2px; color: #111; font-size: 12px; line-height: 17px; }
.wsmenu li { height: 17px; padding-left: 17px; position: relative; white-space: nowrap; letter-spacing: .3px; }
.wsmenu .sel-item { background: #0078d7; color: #fff; margin-right: 2px; }
.sel-item svg { position: absolute; left: 4px; top: 4px; }
.wsmenu .msep { height: 1px; margin: 4px 2px 6px 0; background: #b8b8b8; padding: 0; }

/* ime */
.ime { position: absolute; left: 1728px; top: 1020px; width: 191px; height: 28px; background: #f3f6fa; display: flex; align-items: center; gap: 9px; padding-left: 7px; border-radius: 2px 0 0 0; }
.sogou { width: 28px; height: 25px; background: linear-gradient(135deg, #ff7a30, #f24a15); border-radius: 3px; color: #fff; font: italic bold 24px/25px "Liberation Sans", sans-serif; text-align: center; transform: rotate(-12deg); flex: none; }
.imesep { width: 3px; height: 100%; border-left: 1px solid #f0b0a0; border-right: 1px solid #f0b0a0; margin-left: -2px; flex: none; }
.imecn { color: #0a66c2; font-size: 16px; font-weight: 700; margin-left: -1px; }
.imep { color: #0a66c2; font-size: 13px; font-weight: 700; margin-left: -5px; }
.watermark { position: absolute; left: 1792px; top: 1021px; font: 15px "Noto Sans CJK SC", "Liberation Sans", sans-serif; color: rgba(90,90,90,.75); white-space: nowrap; }
.meter { position: absolute; left: 1909px; top: 982px; width: 9px; height: 58px; background: #222; border: 1px solid #777; border-radius: 4px; overflow: hidden; }
.meter i { position: absolute; left: 0; right: 0; bottom: 0; height: 33px; background: repeating-linear-gradient(#3fae5a 0 2px, #1c3a24 2px 3px); }
```
